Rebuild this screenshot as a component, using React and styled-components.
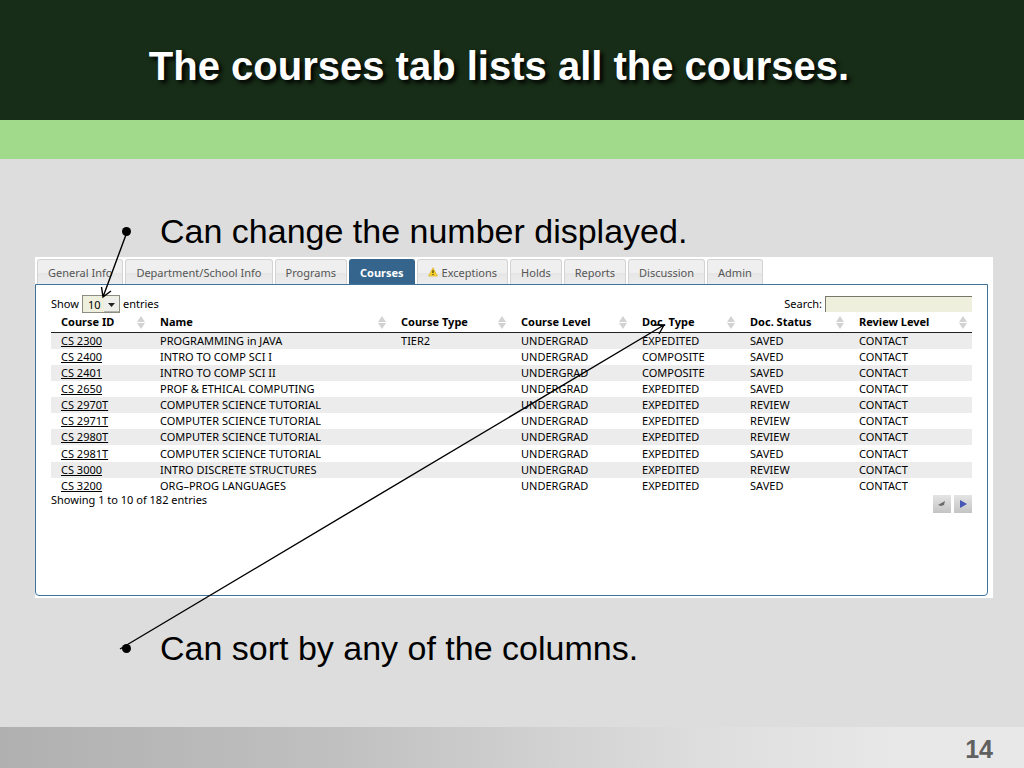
import styled, { createGlobalStyle } from "styled-components";

const GlobalStyle = createGlobalStyle`
  * {
    box-sizing: border-box;
  }

  body {
    margin: 0;
    background-color: #dddddd;
  }
`;

const Slide = styled.div`
  min-height: 100vh;
  display: flex;
  flex-direction: column;
  font-family: "Liberation Sans", Arial, sans-serif;
  color: black;
`;

const Header = styled.header`
  height: 159px;
  padding: 12px 26px 0 0;
  display: flex;
  align-items: center;
  justify-content: center;
  background-color: #172d17;
  border-bottom: 39px solid #a0da8a;
`;

const Title = styled.h1`
  margin: 0;
  font-size: 40px;
  line-height: 46px;
  font-weight: 700;
  color: white;
  text-shadow: 3px 3px 4px black;
`;

const Body = styled.main`
  position: relative;
  flex: 1;
  padding: 52px 31px 0 35px;
`;

const Point = styled.p`
  margin: 0;
  padding-left: 87px;
  display: flex;
  align-items: center;
  gap: 29px;
  font-size: 34px;
  line-height: 40px;

  &::before {
    content: "";
    width: 9px;
    height: 9px;
    border-radius: 50%;
    background-color: black;
  }
`;

const Shot = styled.section`
  margin: 6px 0 30px;
  padding: 2px 5px 2px 0;
  background-color: white;
  font-family: "Noto Sans", sans-serif;
  font-size: 11px;
  line-height: 16px;
  color: black;
`;

const Tabs = styled.nav`
  display: flex;
  gap: 2px;
  padding-left: 2px;
`;

const Tab = styled.button`
  height: 25px;
  padding: 0 10px;
  display: flex;
  align-items: center;
  gap: 4px;
  border: 1px solid ${(props) => (props.$active ? "#35648c" : "#d3d3d3")};
  border-bottom: none;
  border-radius: 3px 3px 0 0;
  background: ${(props) =>
    props.$active
      ? "#35648c"
      : "linear-gradient(#efefef 55%, #e6e6e6 55%, #ededed)"};
  color: ${(props) => (props.$active ? "white" : "#555555")};
  font-family: inherit;
  font-size: 11px;
  font-weight: ${(props) => (props.$active ? 700 : 400)};
  white-space: nowrap;
`;

const Panel = styled.div`
  height: 312px;
  padding: 10px 15px;
  border: 1px solid #41729a;
  border-radius: 0 0 4px 4px;
`;

const Toolbar = styled.div`
  display: flex;
  justify-content: space-between;
  align-items: center;
  height: 18px;
`;

const Field = styled.label`
  display: flex;
  align-items: center;
  gap: 3px;
`;

const SelectBox = styled.span`
  position: relative;
  display: flex;

  svg {
    position: absolute;
    right: 1px;
    top: 2px;
    pointer-events: none;
  }
`;

const Select = styled.select`
  appearance: none;
  width: 38px;
  height: 18px;
  padding: 0 0 0 5px;
  border: 1px solid #8c8c80;
  border-radius: 0;
  background-color: #eef0dd;
  color: black;
  font-family: inherit;
  font-size: 11px;
`;

const SearchInput = styled.input`
  width: 147px;
  height: 16px;
  padding: 0 4px;
  border: none;
  border-top: 1px solid #77776c;
  border-left: 1px solid #77776c;
  background-color: #eef0dd;
  font-family: inherit;
  font-size: 11px;
`;

const Table = styled.table`
  width: 100%;
  height: 181px;
  table-layout: fixed;
  border-collapse: collapse;

  th,
  td {
    padding: 0 5px 0 10px;
    text-align: left;
    white-space: nowrap;
    line-height: 16px;
  }

  th {
    height: 19px;
    border-bottom: 1px solid #222222;
  }

  tbody tr:nth-child(odd) {
    background-color: #ececec;
  }

  a {
    color: inherit;
  }
`;

const Col = styled.col`
  width: ${(props) => props.$width}%;
`;

const HeadCell = styled.div`
  display: flex;
  align-items: center;
  justify-content: space-between;
`;

const TableFooter = styled.div`
  display: flex;
  justify-content: space-between;
  line-height: 12px;
`;

const Pager = styled.div`
  display: flex;
  gap: 3px;
  padding-top: 1px;
`;

const PageButton = styled.button`
  width: 18px;
  height: 18px;
  padding: 0;
  display: flex;
  align-items: center;
  justify-content: center;
  border: none;
  background: linear-gradient(#e4e4e4, #c4c4c4);
`;

const Arrows = styled.svg`
  position: absolute;
  left: 0;
  top: 0;
  pointer-events: none;
`;

const Footer = styled.footer`
  height: 41px;
  padding: 4px 31px 0 0;
  display: flex;
  align-items: center;
  justify-content: flex-end;
  background: linear-gradient(
    to right,
    #b0b0b0,
    #c0c0c0 33%,
    #dedede 69%,
    #e8e8e8 88%
  );
  color: #606060;
  font-size: 25px;
  font-weight: 700;
`;

const tabs = [
  "General Info",
  "Department/School Info",
  "Programs",
  "Courses",
  "Exceptions",
  "Holds",
  "Reports",
  "Discussion",
  "Admin",
];

const columns = [
  { name: "Course ID", width: 10.75 },
  { name: "Name", width: 26.17 },
  { name: "Course Type", width: 13.03 },
  { name: "Course Level", width: 13.14 },
  { name: "Doc. Type", width: 11.73 },
  { name: "Doc. Status", width: 11.83 },
  { name: "Review Level", width: 13.35 },
];

const courses = [
  ["CS 2300", "PROGRAMMING in JAVA", "TIER2", "EXPEDITED", "SAVED"],
  ["CS 2400", "INTRO TO COMP SCI I", "", "COMPOSITE", "SAVED"],
  ["CS 2401", "INTRO TO COMP SCI II", "", "COMPOSITE", "SAVED"],
  ["CS 2650", "PROF & ETHICAL COMPUTING", "", "EXPEDITED", "SAVED"],
  ["CS 2970T", "COMPUTER SCIENCE TUTORIAL", "", "EXPEDITED", "REVIEW"],
  ["CS 2971T", "COMPUTER SCIENCE TUTORIAL", "", "EXPEDITED", "REVIEW"],
  ["CS 2980T", "COMPUTER SCIENCE TUTORIAL", "", "EXPEDITED", "REVIEW"],
  ["CS 2981T", "COMPUTER SCIENCE TUTORIAL", "", "EXPEDITED", "SAVED"],
  ["CS 3000", "INTRO DISCRETE STRUCTURES", "", "EXPEDITED", "REVIEW"],
  ["CS 3200", "ORG–PROG LANGUAGES", "", "EXPEDITED", "SAVED"],
];

const WarningIcon = () => (
  <svg width="10" height="10" viewBox="0 0 10 10">
    <path d="M5 0.8 9.4 9H0.6Z" fill="#f6d22e" stroke="#dcb52c" strokeWidth="0.8" />
    <path d="M5 3.2V6M5 7v1" stroke="#4a3a10" strokeWidth="1.3" />
  </svg>
);

const SortIcon = () => (
  <svg width="8" height="13" viewBox="0 0 8 13">
    <path d="M4 0 8 6H0ZM4 13 8 7H0Z" fill="#d2d2d2" />
  </svg>
);

const App = () => {
  return (
    <Slide>
      <GlobalStyle />
      <Header>
        <Title>The courses tab lists all the courses.</Title>
      </Header>
      <Body>
        <Point>Can change the number displayed.</Point>
        <Shot>
          <Tabs>
            {tabs.map((tab) => (
              <Tab key={tab} type="button" $active={tab === "Courses"}>
                {tab === "Exceptions" && <WarningIcon />}
                {tab}
              </Tab>
            ))}
          </Tabs>
          <Panel>
            <Toolbar>
              <Field>
                Show
                <SelectBox>
                  <Select defaultValue="10">
                    <option>10</option>
                    <option>25</option>
                    <option>50</option>
                  </Select>
                  <svg width="15" height="15" viewBox="0 0 15 15">
                    <path d="M0 0H15V15H0Z" fill="#eeeeea" />
                    <path d="M0 14.5H15" stroke="#b5b5ad" />
                    <path d="M4 6H11L7.5 10Z" fill="#222222" />
                  </svg>
                </SelectBox>
                entries
              </Field>
              <Field>
                Search:
                <SearchInput type="text" />
              </Field>
            </Toolbar>
            <Table>
              <colgroup>
                {columns.map((column) => (
                  <Col key={column.name} $width={column.width} />
                ))}
              </colgroup>
              <thead>
                <tr>
                  {columns.map((column) => (
                    <th key={column.name}>
                      <HeadCell>
                        {column.name}
                        <SortIcon />
                      </HeadCell>
                    </th>
                  ))}
                </tr>
              </thead>
              <tbody>
                {courses.map(([id, name, type, docType, status]) => (
                  <tr key={id}>
                    <td>
                      <a href="#course">{id}</a>
                    </td>
                    <td>{name}</td>
                    <td>{type}</td>
                    <td>UNDERGRAD</td>
                    <td>{docType}</td>
                    <td>{status}</td>
                    <td>CONTACT</td>
                  </tr>
                ))}
              </tbody>
            </Table>
            <TableFooter>
              Showing 1 to 10 of 182 entries
              <Pager>
                <PageButton type="button" aria-label="Previous">
                  <svg width="8" height="8" viewBox="0 0 8 8">
                    <path d="M0 5 7 1 6 5 3 6Z" fill="#6b6b6b" />
                  </svg>
                </PageButton>
                <PageButton type="button" aria-label="Next">
                  <svg width="8" height="8" viewBox="0 0 8 8">
                    <path d="M1 0 8 4 1 8Z" fill="#4656b4" />
                  </svg>
                </PageButton>
              </Pager>
            </TableFooter>
          </Panel>
        </Shot>
        <Point>Can sort by any of the columns.</Point>
        <Arrows
          width="700"
          height="510"
          viewBox="0 0 700 510"
          fill="none"
          stroke="black"
          strokeWidth="1.4"
        >
          <path d="M127 73 103 138M101.5 128 103 138 111 132" />
          <path d="M120 490 664 166M654 166 664 166 659 175" />
        </Arrows>
      </Body>
      <Footer>14</Footer>
    </Slide>
  );
};

export default App;
